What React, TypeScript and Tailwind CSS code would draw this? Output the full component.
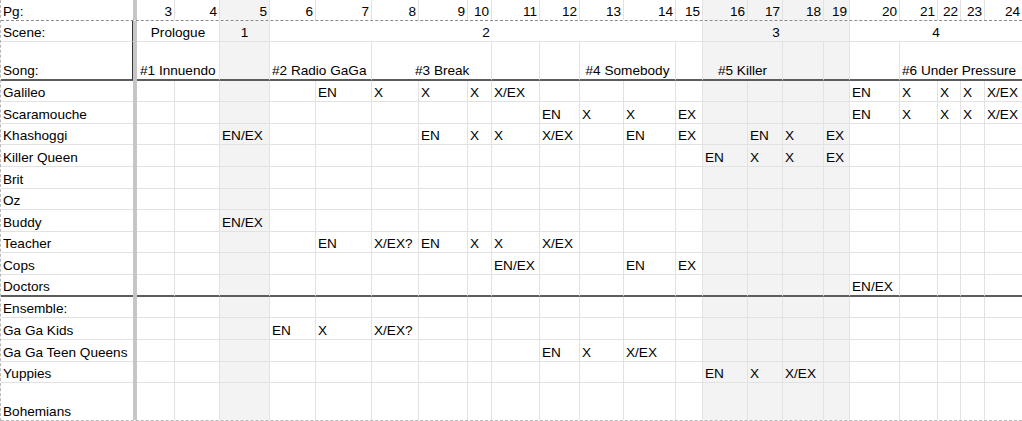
const GRID =
  'grid grid-cols-[132px_4px_37px_45px_50px_46px_56px_47px_49px_24px_48px_40px_44px_52px_27px_45px_35px_41px_26px_50px_38px_23px_24px_38px]';

// columns that are greyed out on the sheet
const SHADED = new Set([5, 16, 17, 18, 19]);

const SPAN: Record<number, string> = {
  1: '',
  2: 'col-span-2',
  3: 'col-span-3',
  4: 'col-span-4',
  5: 'col-span-5',
  10: 'col-span-10',
};

type Seg = { col: number; span?: number; text?: string; align?: 'l' | 'c' | 'r'; pad?: string };
type Bottom = 'light' | 'dark' | 'none';

const PAGES = Array.from({ length: 22 }, (_, i) => i + 3);

const pgSegs: Seg[] = PAGES.map((p) => ({ col: p, text: String(p), align: 'r' }));

const sceneSegs: Seg[] = [
  { col: 3, span: 2, text: 'Prologue', align: 'c' },
  { col: 5, text: '1', align: 'c' },
  { col: 6, span: 10, text: '2', align: 'c' },
  { col: 16, span: 4, text: '3', align: 'c' },
  { col: 20, span: 5, text: '4', align: 'c' },
];

const songSegs: Seg[] = [
  { col: 3, span: 2, text: '#1 Innuendo', pad: 'pl-[3px]' },
  { col: 5 },
  { col: 6, span: 2, text: '#2 Radio GaGa' },
  { col: 8, span: 3, text: '#3 Break', pad: 'pl-[43px]' },
  { col: 11 },
  { col: 12 },
  { col: 13, span: 2, text: '#4 Somebody', align: 'c' },
  { col: 15 },
  { col: 16, span: 2, text: '#5 Killer', align: 'c' },
  { col: 18 },
  { col: 19 },
  { col: 20 },
  { col: 21, span: 4, text: '#6 Under Pressure' },
];

// cast entries: page column -> EN / X / EX
const cast: { name: string; h: string; bottom?: Bottom; cells: Record<number, string> }[] = [
  { name: 'Galileo', h: 'h-[21px]', cells: { 7: 'EN', 8: 'X', 9: 'X', 10: 'X', 11: 'X/EX', 20: 'EN', 21: 'X', 22: 'X', 23: 'X', 24: 'X/EX' } },
  { name: 'Scaramouche', h: 'h-[22px]', cells: { 12: 'EN', 13: 'X', 14: 'X', 15: 'EX', 20: 'EN', 21: 'X', 22: 'X', 23: 'X', 24: 'X/EX' } },
  { name: 'Khashoggi', h: 'h-[21px]', cells: { 5: 'EN/EX', 9: 'EN', 10: 'X', 11: 'X', 12: 'X/EX', 14: 'EN', 15: 'EX', 17: 'EN', 18: 'X', 19: 'EX' } },
  { name: 'Killer Queen', h: 'h-[22px]', cells: { 16: 'EN', 17: 'X', 18: 'X', 19: 'EX' } },
  { name: 'Brit', h: 'h-[22px]', cells: {} },
  { name: 'Oz', h: 'h-[21px]', cells: {} },
  { name: 'Buddy', h: 'h-[22px]', cells: { 5: 'EN/EX' } },
  { name: 'Teacher', h: 'h-[21px]', cells: { 7: 'EN', 8: 'X/EX?', 9: 'EN', 10: 'X', 11: 'X', 12: 'X/EX' } },
  { name: 'Cops', h: 'h-[22px]', cells: { 11: 'EN/EX', 14: 'EN', 15: 'EX' } },
  { name: 'Doctors', h: 'h-[22px]', bottom: 'dark', cells: { 20: 'EN/EX' } },
  { name: 'Ensemble:', h: 'h-[21px]', cells: {} },
  { name: 'Ga Ga Kids', h: 'h-[22px]', cells: { 6: 'EN', 7: 'X', 8: 'X/EX?' } },
  { name: 'Ga Ga Teen Queens', h: 'h-[22px]', cells: { 12: 'EN', 13: 'X', 14: 'X/EX' } },
  { name: 'Yuppies', h: 'h-[21px]', cells: { 16: 'EN', 17: 'X', 18: 'X/EX' } },
  { name: 'Bohemians', h: 'h-[37px]', bottom: 'none', cells: {} },
];

function bottomClass(bottom: Bottom) {
  if (bottom === 'dark') return 'border-b-2 border-b-[#5c5c5c]';
  if (bottom === 'none') return '';
  return 'border-b border-b-[#e2e2e2]';
}

function Row({ label, segs, h, bottom = 'light', labelBox = false }: { label: string; segs: Seg[]; h: string; bottom?: Bottom; labelBox?: boolean }) {
  const b = bottomClass(bottom);
  return (
    <div className={`${GRID} ${h}`}>
      <div className={`flex items-end pl-[2px] whitespace-nowrap ${b} ${labelBox ? 'border-r border-r-[#3a3a3a]' : ''}`}>{label}</div>
      <div className="bg-[#c6c6c6]" />
      {segs.map((s) => {
        const span = s.span ?? 1;
        let shaded = true;
        for (let c = s.col; c < s.col + span; c++) if (!SHADED.has(c)) shaded = false;
        const align =
          s.align === 'c' ? 'justify-center' : s.align === 'r' ? 'justify-end pr-[2px]' : `justify-start ${s.pad ?? 'pl-[2px]'}`;
        return (
          <div
            key={s.col}
            className={`flex items-end whitespace-nowrap ${SPAN[span]} ${align} ${b} ${s.col === 3 ? '' : 'border-l border-l-[#e2e2e2]'} ${shaded ? 'bg-[#f3f3f3]' : ''}`}
          >
            {s.text}
          </div>
        );
      })}
    </div>
  );
}

export default function App() {
  return (
    <div className="w-[1022px] h-[421px] overflow-hidden bg-white text-black text-[13.6px] leading-[16px] font-['Liberation_Sans',Arial,sans-serif]">
      <div className="border-l border-dashed border-l-[#b8b8b8]">
        <Row label="Pg:" segs={pgSegs} h="h-[20px]" bottom="none" />
        <div className="border-t border-dashed border-t-[#8c8c8c]" />
        <Row label="Scene:" segs={sceneSegs} h="h-[21px]" labelBox />
        <Row label="Song:" segs={songSegs} h="h-[39px]" bottom="dark" labelBox />

        {cast.map((r) => (
          <Row
            key={r.name}
            label={r.name}
            h={r.h}
            bottom={r.bottom}
            segs={PAGES.map((p) => ({ col: p, text: r.cells[p] }))}
          />
        ))}

        <div className="border-t border-dashed border-t-[#b8b8b8]" />
      </div>
    </div>
  );
}
